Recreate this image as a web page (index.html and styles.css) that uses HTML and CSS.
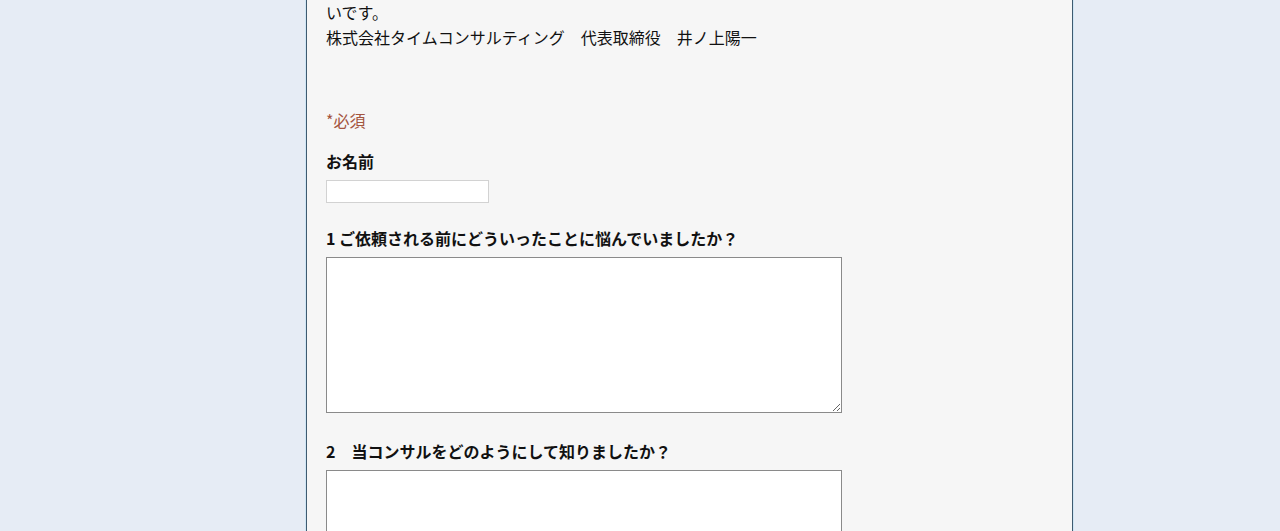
FILE: index.html
```html
<!DOCTYPE html>
<html lang="ja">
<head>
<meta charset="utf-8">
<title>アンケート</title>
<link rel="stylesheet" href="styles.css">
</head>
<body>
<div class="page">
  <main class="panel">
    <div class="intro">
      <p>いです。<br>株式会社タイムコンサルティング　代表取締役　井ノ上陽一</p>
    </div>
    <form class="form">
      <p class="required">*必須</p>
      <div class="field">
        <label class="label" for="name">お名前</label>
        <input class="text-input" id="name" type="text">
      </div>
      <div class="field">
        <label class="label" for="q1">1 ご依頼される前にどういったことに悩んでいましたか？</label>
        <textarea class="area" id="q1"></textarea>
      </div>
      <div class="field">
        <label class="label" for="q2">2　当コンサルをどのようにして知りましたか？</label>
        <textarea class="area" id="q2"></textarea>
      </div>
    </form>
  </main>
</div>
</body>
</html>
```

FILE: styles.css
```css
html, body {
  margin: 0;
  padding: 0;
  height: 100%;
  overflow: hidden;
}
body {
  background: #e6ecf5;
  font-family: "Noto Sans CJK JP", "Noto Sans", sans-serif;
  font-size: 16px;
  line-height: 25px;
  color: #111;
}
.page {
  display: flex;
  min-height: 100%;
}
.panel {
  margin-left: 306px;
  width: 767px;
  background: #f6f6f6;
  border-left: 1px solid #3f5a70;
  border-right: 1px solid #3f5a70;
  box-shadow: 1px 0 0 #cfe6f5, -1px 0 0 #cfe6f5;
  padding: 0 19px;
  box-sizing: border-box;
  min-height: 900px;
}
.intro p {
  margin: 0;
}
.form {
  padding-top: 58px;
}
.required {
  margin: 0 0 16px;
  color: #a4553f;
}
.field {
  display: flex;
  flex-direction: column;
  align-items: flex-start;
}
.label {
  font-weight: bold;
  margin-bottom: 6px;
}
.text-input {
  width: 163px;
  height: 23px;
  box-sizing: border-box;
  border: 1px solid #d2d2d2;
  background: #fff;
  margin: 0 0 23px;
  padding: 0 4px;
  font: inherit;
}
.area {
  width: 516px;
  height: 156px;
  box-sizing: border-box;
  border: 1px solid #8a8a8a;
  background: #fff;
  margin: 0 0 26px;
  font: inherit;
  resize: both;
}
```
